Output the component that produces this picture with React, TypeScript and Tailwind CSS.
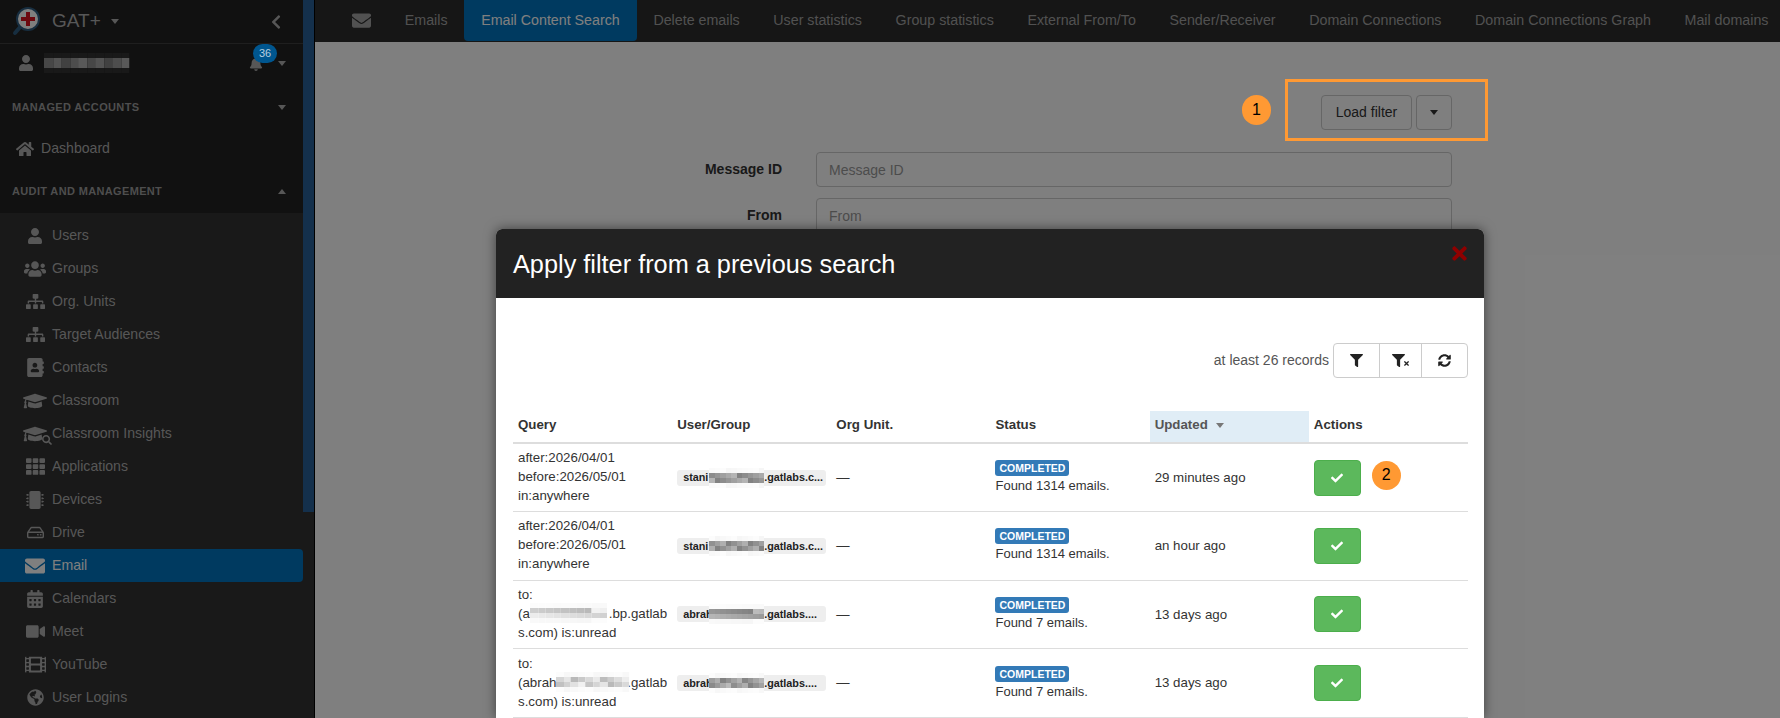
import type { ReactNode } from "react";
import {
  FaAddressBook,
  FaBell,
  FaCalendarAlt,
  FaCheck,
  FaChevronLeft,
  FaEnvelope,
  FaFilm,
  FaFilter,
  FaGlobeAmericas,
  FaGraduationCap,
  FaHome,
  FaMicrochip,
  FaRegHdd,
  FaSearch,
  FaSitemap,
  FaSyncAlt,
  FaTh,
  FaTimes,
  FaUser,
  FaUsers,
  FaVideo,
} from "react-icons/fa";

const navItems: { label: string; icon: ReactNode; active?: boolean }[] = [
  { label: "Users", icon: <FaUser size={16} /> },
  { label: "Groups", icon: <FaUsers size={22} /> },
  { label: "Org. Units", icon: <FaSitemap size={19} /> },
  { label: "Target Audiences", icon: <FaSitemap size={19} /> },
  { label: "Contacts", icon: <FaAddressBook size={19} /> },
  { label: "Classroom", icon: <FaGraduationCap size={24} /> },
  {
    label: "Classroom Insights",
    icon: (
      <span className="relative flex">
        <FaGraduationCap size={24} />
        <FaSearch size={10} className="absolute -right-[5px] bottom-[1px]" />
      </span>
    ),
  },
  { label: "Applications", icon: <FaTh size={19} /> },
  { label: "Devices", icon: <FaMicrochip size={18} /> },
  { label: "Drive", icon: <FaRegHdd size={17} /> },
  { label: "Email", icon: <FaEnvelope size={20} />, active: true },
  { label: "Calendars", icon: <FaCalendarAlt size={18} /> },
  { label: "Meet", icon: <FaVideo size={19} /> },
  { label: "YouTube", icon: <FaFilm size={21} /> },
  { label: "User Logins", icon: <FaGlobeAmericas size={17} /> },
];

const tabs = [
  "Emails",
  "Email Content Search",
  "Delete emails",
  "User statistics",
  "Group statistics",
  "External From/To",
  "Sender/Receiver",
  "Domain Connections",
  "Domain Connections Graph",
  "Mail domains",
];

const rows = [
  {
    query: ["after:2026/04/01", "before:2026/05/01", "in:anywhere"],
    user: ["stani", ".gatlabs.c..."],
    seed: 3,
    found: "Found 1314 emails.",
    updated: "29 minutes ago",
    marker: true,
  },
  {
    query: ["after:2026/04/01", "before:2026/05/01", "in:anywhere"],
    user: ["stani", ".gatlabs.c..."],
    seed: 8,
    found: "Found 1314 emails.",
    updated: "an hour ago",
  },
  {
    query: ["to:", "(al", ".bp.gatlab", "s.com) is:unread"],
    user: ["abrah", ".gatlabs...."],
    seed: 14,
    found: "Found 7 emails.",
    updated: "13 days ago",
  },
  {
    query: ["to:", "(abrah", ".gatlab", "s.com) is:unread"],
    user: ["abrah", ".gatlabs...."],
    seed: 21,
    found: "Found 7 emails.",
    updated: "13 days ago",
  },
];

function Caret({ up, className }: { up?: boolean; className?: string }) {
  return (
    <span
      className={`inline-block h-0 w-0 border-x-[4px] border-x-transparent ${
        up ? "border-b-[5px]" : "border-t-[5px]"
      } ${className ?? ""}`}
    />
  );
}

// grey blocks standing in for the redacted bits of the screenshot
function Mosaic({ seed, tone = "mid", className }: { seed: number; tone?: "mid" | "light" | "dark"; className: string }) {
  const cells = Array.from({ length: 40 }, (_, i) => {
    const row = Math.floor(i / 10);
    const noise = ((i + 3) * (seed + 7) * 37) % 60;
    const middle = row === 1 || row === 2;
    let v: number;
    if (tone === "dark") {
      v = middle ? 130 + noise : 50;
    } else {
      const base = middle ? (tone === "light" ? 205 : 150) : 246;
      v = Math.min(252, base + (middle ? noise - 20 : noise / 8));
    }
    return `rgb(${v},${v},${v})`;
  });
  return (
    <span className={`absolute grid grid-cols-[repeat(10,5.5px)] auto-rows-[5px] ${className}`}>
      {cells.map((c, i) => (
        <span key={i} style={{ background: c }} />
      ))}
    </span>
  );
}

function Logo() {
  return (
    <svg width="28" height="32" viewBox="0 0 28 32" className="ml-[12px]">
      <path d="M9 20 L3 27" stroke="#2f5c80" strokeWidth="4" strokeLinecap="round" />
      <circle cx="16" cy="13" r="11" fill="#fff" stroke="#2f5c80" strokeWidth="2" />
      <path d="M14 6h4v5h5v4h-5v5h-4v-5H9v-4h5z" fill="#d8101e" />
    </svg>
  );
}

function Sidebar() {
  return (
    <aside className="flex h-[718px] w-[303px] shrink-0 flex-col bg-[#323232] text-[14.1px] text-[#aeaeae]">
      <div className="bg-[#222222]">
        <div className="flex h-[44px] items-center border-b border-[#3e3e3e]">
          <Logo />
          <span className="ml-[12px] text-[19px]">GAT+</span>
          <Caret className="ml-[10px] border-t-[#aeaeae]" />
          <FaChevronLeft size={16} className="ml-auto mr-[19px]" />
        </div>
        <div className="flex h-[38px] items-center pl-[18px]">
          <FaUser size={16} />
          <span className="relative ml-[10px] block h-[12px] w-[86px]">
            <Mosaic seed={5} tone="dark" className="left-0 -top-[4px] origin-left scale-x-[1.55]" />
          </span>
          <span className="relative ml-auto mr-[17px] flex items-center">
            <FaBell size={14} className="mt-[2px]" />
            <span className="relative z-[60] -ml-[10px] -mt-[20px] flex h-[19px] w-[24px] items-center justify-center rounded-full bg-[#00568f] text-[11px] text-[#b8cfdf]">
              36
            </span>
            <Caret className="ml-[1px] border-t-[#aeaeae]" />
          </span>
        </div>
        <div className="flex h-[51px] items-center justify-between pl-[12px] pr-[17px] text-[11px] font-bold tracking-[0.35px] text-[#9c9c9c]">
          MANAGED ACCOUNTS
          <Caret className="border-t-[#aeaeae]" />
        </div>
        <div className="flex h-[32px] items-center gap-[7px] pl-[16px]">
          <FaHome size={18} />
          <span>Dashboard</span>
        </div>
        <div className="flex h-[48px] items-center justify-between pl-[12px] pr-[17px] pt-[4px] text-[11px] font-bold tracking-[0.35px] text-[#9c9c9c]">
          AUDIT AND MANAGEMENT
          <Caret up className="border-b-[#aeaeae]" />
        </div>
      </div>
      <nav className="pt-[6px]">
        {navItems.map((item) => (
          <div
            key={item.label}
            className={`flex h-[33px] items-center ${
              item.active ? "rounded-r-[4px] bg-[#0074c0] text-white" : ""
            }`}
          >
            <span className="ml-[22px] flex w-[26px] justify-center">{item.icon}</span>
            <span className="ml-[4px]">{item.label}</span>
          </div>
        ))}
      </nav>
    </aside>
  );
}

function TopTabs() {
  return (
    <div className="flex h-[42px] items-start bg-[#2c2c2c] text-[14.25px] text-[#a2a2a2]">
      <span className="ml-[37px] mr-[17px] flex h-[41px] w-[19px] items-center justify-center">
        <FaEnvelope size={19} />
      </span>
      {tabs.map((tab) => (
        <span
          key={tab}
          className={`flex h-[41px] items-center whitespace-nowrap px-[16.8px] ${
            tab === "Email Content Search" ? "rounded-b-[4px] bg-[#0074c0] text-white" : ""
          }`}
        >
          {tab}
        </span>
      ))}
    </div>
  );
}

function FilterForm() {
  return (
    <div className="mr-[328px] flex flex-col items-end pt-[53px] text-[14px]">
      <div className="mb-[22px] flex gap-[4px] text-[#333333]">
        <button className="h-[35px] w-[91px] rounded-[4px] border border-[#cccccc] bg-white">Load filter</button>
        <button className="flex h-[35px] w-[36px] items-center justify-center rounded-[4px] border border-[#cccccc] bg-white">
          <Caret className="border-t-[#333333]" />
        </button>
      </div>
      <div className="flex flex-col gap-[11px]">
        {["Message ID", "From"].map((label) => (
          <div key={label} className="flex w-[966px] items-center">
            <label className="w-[296px] text-right font-bold text-[#333333]">{label}</label>
            <input
              readOnly
              placeholder={label}
              className="ml-[34px] h-[35px] w-[636px] rounded-[4px] border border-[#cccccc] bg-white px-[12px] placeholder:text-[#999999]"
            />
          </div>
        ))}
      </div>
    </div>
  );
}

function ResultsTable() {
  return (
    <table className="w-[955px] table-fixed border-collapse text-[13.3px] text-[#333333]">
      <thead>
        <tr className="h-[32px] border-b-2 border-[#dddddd] text-left font-bold">
          <th className="px-[5px] pb-[3px]">Query</th>
          <th className="px-[5px] pb-[3px]">User/Group</th>
          <th className="px-[5px] pb-[3px]">Org Unit.</th>
          <th className="px-[5px] pb-[3px]">Status</th>
          <th className="bg-[#e0edf6] px-[5px] pb-[3px] text-[#555555]">
            Updated <Caret className="ml-[4px] align-middle border-t-[#777777]" />
          </th>
          <th className="px-[5px] pb-[3px]">Actions</th>
        </tr>
      </thead>
      <tbody>
        {rows.map((row, i) => (
          <tr key={i} className="h-[68.6px] border-b border-[#dddddd]">
            <td className="break-all px-[5px] pb-[2px] leading-[19px]">
              {row.query.length === 3 ? (
                row.query.map((line) => <div key={line}>{line}</div>)
              ) : (
                <>
                  <div>{row.query[0]}</div>
                  <div className="relative flex justify-between">
                    <span>{row.query[1]}</span>
                    <span>{row.query[2]}</span>
                    <Mosaic
                      seed={row.seed}
                      tone="light"
                      className={
                        i === 2
                          ? "left-[12px] -top-[1px] origin-left scale-x-[1.4]"
                          : "left-[38px] -top-[1px] origin-left scale-x-[1.33]"
                      }
                    />
                  </div>
                  <div>{row.query[3]}</div>
                </>
              )}
            </td>
            <td className="px-[5px]">
              <span className="relative flex h-[16px] w-[149px] items-center rounded-[3px] bg-[#eeeeee] pl-[6px] text-[10.8px] font-bold text-[#222222]">
                <span className="w-[81px]">{row.user[0]}</span>
                <span>{row.user[1]}</span>
                <Mosaic seed={row.seed} className="left-[32px] -top-[2px]" />
              </span>
            </td>
            <td className="px-[5px]">—</td>
            <td className="px-[5px]">
              <span className="block h-[16px] w-[74px] rounded-[3px] bg-[#337ab7] text-center text-[10.5px] font-bold leading-[16px] text-white">
                COMPLETED
              </span>
              <div className="text-[13px] leading-[19px]">{row.found}</div>
            </td>
            <td className="px-[5px]">{row.updated}</td>
            <td className="px-[5px]">
              <div className="flex items-center gap-[11px]">
                <button className="flex h-[36px] w-[47px] items-center justify-center rounded-[4px] border border-[#4cae4c] bg-[#5cb85c] text-white">
                  <FaCheck size={12} />
                </button>
                {row.marker && (
                  <span className="-mt-[5px] flex h-[29px] w-[29px] items-center justify-center rounded-full bg-[#ff9933] text-[16px] text-black">
                    2
                  </span>
                )}
              </div>
            </td>
          </tr>
        ))}
      </tbody>
    </table>
  );
}

function FilterModal() {
  return (
    <div className="absolute bottom-0 left-[496px] top-[229px] z-50 w-[988px] overflow-hidden rounded-t-[6px] bg-white shadow-[0_0_12px_rgba(0,0,0,0.5)]">
      <div className="flex h-[69px] items-start justify-between bg-[#222222] pl-[17px] pr-[14px]">
        <h4 className="mt-[20px] text-[25.3px] leading-[30px] text-white">Apply filter from a previous search</h4>
        <FaTimes size={21} className="mt-[14px] text-[#8f0000]" />
      </div>
      <div className="pl-[17px] pr-[16px] pt-[45px]">
        <div className="flex items-center justify-end gap-[4px] text-[14px] text-[#555555]">
          <span>at least 26 records</span>
          <div className="flex h-[35px] rounded-[4px] border border-[#cccccc] text-[#222222]">
            <span className="flex w-[46px] items-center justify-center border-r border-[#cccccc]">
              <FaFilter size={13} />
            </span>
            <span className="flex w-[42px] items-center justify-center border-r border-[#cccccc]">
              <FaFilter size={13} />
              <FaTimes size={7} className="-ml-[2px] mt-[6px]" />
            </span>
            <span className="flex w-[45px] items-center justify-center">
              <FaSyncAlt size={13} />
            </span>
          </div>
        </div>
        <div className="pt-[33px]">
          <ResultsTable />
        </div>
      </div>
    </div>
  );
}

export default function App() {
  return (
    <div className="relative flex h-[718px] w-[1780px] overflow-hidden bg-white font-['Liberation_Sans',Arial,sans-serif]">
      <Sidebar />
      <div className="flex w-[12px] shrink-0 flex-col border-r border-black bg-[#323232]">
        <div className="h-[512px] bg-[#286098]" />
      </div>
      <main className="min-w-0 flex-1">
        <TopTabs />
        <FilterForm />
      </main>

      {/* backdrop */}
      <div className="absolute inset-0 z-40 bg-black/50" />
      <FilterModal />

      {/* tutorial annotations */}
      <div className="absolute left-[1285px] top-[79px] z-50 h-[62px] w-[203px] border-[3.5px] border-[#ff9933]" />
      <span className="absolute left-[1242px] top-[95px] z-50 flex h-[30px] w-[29px] items-center justify-center rounded-full bg-[#ff9933] text-[16px] text-black">
        1
      </span>
    </div>
  );
}
